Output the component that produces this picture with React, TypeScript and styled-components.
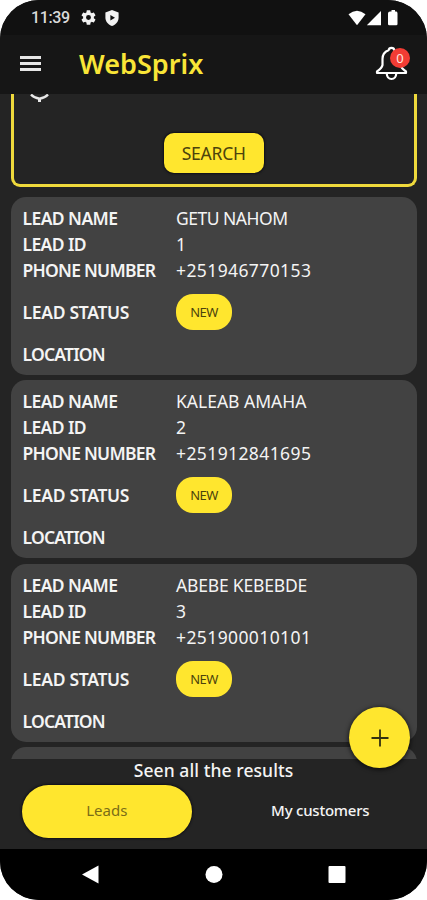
import React from "react";
import styled, { createGlobalStyle } from "styled-components";

const yellow = "#ffe62e";

const GlobalStyle = createGlobalStyle`
  * { box-sizing: border-box; }
  body { margin: 0; background: #fff; }
  button { border: 0; padding: 0; margin: 0; background: none; font: inherit; color: inherit; }
`;

const Screen = styled.div`
  position: relative;
  display: flex;
  flex-direction: column;
  width: 427px;
  height: 900px;
  overflow: hidden;
  border-radius: 39px;
  background: #242424;
  color: #f4f4f4;
  font-family: "Noto Sans", sans-serif;
`;

const StatusBar = styled.div`
  display: flex;
  align-items: center;
  flex: none;
  height: 35px;
  padding: 0 29px 0 31px;
  background: #111;
`;

const Clock = styled.span`
  width: 50px;
  padding-top: 1px;
  font: 500 16px/20px Roboto, sans-serif;
  letter-spacing: -0.35px;
  color: #dadada;
`;

const StatusIcons = styled.div<{ $gap: number; $end?: boolean }>`
  display: flex;
  align-items: center;
  gap: ${(p) => p.$gap}px;
  margin-left: ${(p) => (p.$end ? "auto" : "0")};
`;

const Header = styled.header`
  display: flex;
  align-items: center;
  flex: none;
  height: 59px;
  padding: 0 17px 2px 20px;
  background: #161616;
`;

const MenuButton = styled.button`
  display: grid;
  gap: 3px;
  width: 21px;
  margin-right: 38px;
`;

const MenuLine = styled.span`
  height: 3px;
  background: #e6e6e6;
`;

const Title = styled.h1`
  flex: 1;
  margin: 0;
  font-size: 27px;
  line-height: 36px;
  font-weight: 600;
  letter-spacing: 0.02px;
  color: #f9e537;
`;

const BellButton = styled.button`
  position: relative;
  display: block;
  width: 36px;
  height: 36px;
`;

const Count = styled.span`
  position: absolute;
  top: 2px;
  right: 0;
  width: 20px;
  height: 20px;
  border-radius: 50%;
  background: #f23c34;
  color: #ffe3df;
  font-size: 13px;
  line-height: 20px;
  text-align: center;
`;

const Content = styled.main`
  display: flex;
  flex-direction: column;
  flex: none;
  height: 665px;
  padding: 0 10.5px 0 11px;
  overflow: hidden;
`;

const SearchPanel = styled.section`
  display: flex;
  flex-direction: column;
  align-items: center;
  flex: none;
  height: 93px;
  margin-bottom: 10px;
  border: solid #efd93c;
  border-width: 0 3px 3px;
  border-radius: 0 0 9px 9px;
`;

const Chevron = styled.svg`
  display: block;
  align-self: flex-start;
  margin: 0 0 30px 15px;
`;

const SearchButton = styled.button`
  width: 100px;
  height: 40px;
  padding-bottom: 1px;
  border-radius: 10px;
  background: ${yellow};
  color: #4c430c;
  font-size: 17.5px;
  letter-spacing: -0.2px;
  box-shadow: 0 0 2px 1px #101018;
`;

const Card = styled.article`
  flex: none;
  height: 178px;
  margin-bottom: 5.4px;
  padding: 8px 11.5px;
  border-radius: 15px;
  background: #424242;
`;

const Row = styled.div<{ $tall?: boolean }>`
  display: grid;
  grid-template-columns: 153.5px 1fr;
  align-items: center;
  height: ${(p) => (p.$tall ? 42 : 26)}px;
  margin: ${(p) => (p.$tall ? "8px 0" : "0")};
  font-size: 17.5px;
  line-height: 26px;
  white-space: nowrap;
`;

const Label = styled.span<{ $track: number }>`
  font-weight: 600;
  letter-spacing: ${(p) => p.$track}px;
`;

const Value = styled.span<{ $track: number }>`
  letter-spacing: ${(p) => p.$track}px;
`;

const StatusPill = styled.span`
  width: 56px;
  height: 36px;
  border-radius: 17px;
  background: ${yellow};
  color: #4c430c;
  font-size: 13px;
  line-height: 36px;
  letter-spacing: -0.5px;
  text-align: center;
`;

const Footer = styled.footer`
  display: flex;
  flex-direction: column;
  flex: none;
  height: 90px;
`;

const ResultNote = styled.p`
  margin: 0;
  padding-bottom: 4px;
  font-size: 17.5px;
  line-height: 22px;
  font-weight: 500;
  letter-spacing: 0.08px;
  text-align: center;
`;

const Tabs = styled.nav`
  display: grid;
  grid-template-columns: 1fr 1fr;
`;

const Tab = styled.button<{ $active?: boolean }>`
  width: 170px;
  height: 53px;
  margin: 0 auto;
  padding-bottom: 4px;
  border-radius: 27px;
  background: ${(p) => (p.$active ? yellow : "transparent")};
  color: ${(p) => (p.$active ? "#7b6d17" : "#f4f4f4")};
  box-shadow: ${(p) => (p.$active ? "0 0 2px 1px #111118" : "none")};
  font-size: 15px;
  font-weight: ${(p) => (p.$active ? 400 : 500)};
  letter-spacing: ${(p) => (p.$active ? 0 : -0.23)}px;
`;

const AddButton = styled.button`
  position: absolute;
  left: 349px;
  top: 707px;
  display: grid;
  place-items: center;
  width: 61px;
  height: 61px;
  border-radius: 50%;
  background: ${yellow};
  box-shadow: 0 1px 4px 1px rgba(0, 0, 0, 0.6);
`;

const SystemBar = styled.div`
  display: grid;
  grid-template-columns: repeat(3, 123px);
  justify-content: center;
  align-items: center;
  justify-items: center;
  flex: none;
  height: 51px;
  background: #000;
`;

type Lead = { id: number; name: string; track: number; phone: string };

const leads: Lead[] = [
  { id: 1, name: "GETU NAHOM", track: -0.5, phone: "+251946770153" },
  { id: 2, name: "KALEAB AMAHA", track: 0, phone: "+251912841695" },
  { id: 3, name: "ABEBE KEBEBDE", track: -0.19, phone: "+251900010101" },
];

function LeadCard({ lead }: { lead: Lead }) {
  return (
    <Card>
      <Row>
        <Label $track={-0.57}>LEAD NAME</Label>
        <Value $track={lead.track}>{lead.name}</Value>
      </Row>
      <Row>
        <Label $track={-0.6}>LEAD ID</Label>
        <Value $track={0}>{lead.id}</Value>
      </Row>
      <Row>
        <Label $track={-0.75}>PHONE NUMBER</Label>
        <Value $track={0.4}>{lead.phone}</Value>
      </Row>
      <Row $tall>
        <Label $track={-0.3}>LEAD STATUS</Label>
        <StatusPill>NEW</StatusPill>
      </Row>
      <Row>
        <Label $track={-0.8}>LOCATION</Label>
      </Row>
    </Card>
  );
}

function GearIcon() {
  return (
    <svg width="15" height="15" viewBox="2 2 20 20" fill="#f2f2f2">
      <path d="M19.14 12.94c.04-.3.06-.61.06-.94 0-.32-.02-.64-.07-.94l2.03-1.58a.49.49 0 0 0 .12-.61l-1.92-3.32a.488.488 0 0 0-.59-.22l-2.39.96c-.5-.38-1.03-.7-1.62-.94l-.36-2.54a.484.484 0 0 0-.48-.41h-3.84c-.24 0-.43.17-.47.41l-.36 2.54c-.59.24-1.13.57-1.62.94l-2.39-.96c-.22-.08-.47 0-.59.22L2.74 8.87c-.12.21-.08.47.12.61l2.03 1.58c-.05.3-.09.63-.09.94s.02.64.07.94l-2.03 1.58a.49.49 0 0 0-.12.61l1.92 3.32c.12.22.37.29.59.22l2.39-.96c.5.38 1.03.7 1.62.94l.36 2.54c.05.24.24.41.48.41h3.84c.24 0 .44-.17.47-.41l.36-2.54c.59-.24 1.13-.56 1.62-.94l2.39.96c.22.08.47 0 .59-.22l1.92-3.32c.12-.22.07-.47-.12-.61l-2.01-1.58zM12 15.3A3.3 3.3 0 1 1 12 8.7a3.3 3.3 0 0 1 0 6.6z" />
    </svg>
  );
}

function ShieldIcon() {
  return (
    <svg width="14" height="16" viewBox="0 0 14 16">
      <path d="M7 0L13.6 2.4V7.5C13.6 11.5 10.8 14.8 7 16C3.2 14.8.4 11.5.4 7.5V2.4Z" fill="#f2f2f2" />
      <path d="M5.4 4.9L10 7.7L5.4 10.5Z" fill="#111" />
    </svg>
  );
}

export default function App() {
  return (
    <>
      <GlobalStyle />
      <Screen>
        <StatusBar>
          <Clock>11:39</Clock>
          <StatusIcons $gap={9}>
            <GearIcon />
            <ShieldIcon />
          </StatusIcons>
          <StatusIcons $gap={0} $end>
            <svg width="50" height="16" viewBox="0 0 50 16" fill="#fff">
              <path d="M0.500 4.200Q9 -2.800 17.500 4.200L9 15.300Z" />
              <path d="M33 1V15.300H18.800Z" />
              <path d="M42 1.500h1.500V0h3.500v1.500h1.500Q49.500 2 49.500 3.500V14q0 1.300-1.300 1.300h-6.900Q40 15.300 40 14V3.500Q40 1.500 42 1.500Z" />
            </svg>
          </StatusIcons>
        </StatusBar>
        <Header>
          <MenuButton aria-label="Menu">
            <MenuLine />
            <MenuLine />
            <MenuLine />
          </MenuButton>
          <Title>WebSprix</Title>
          <BellButton aria-label="Notifications">
            <svg width="36" height="36" viewBox="0 0 36 36" fill="none" stroke="#fff" strokeWidth="2.200" strokeLinejoin="round">
              <path d="M14.500 4.300Q15 1.800 17.500 1.800Q20 1.800 20.500 4.300Q26.500 6.500 26.500 13V19Q27 22 32 25.500V27H3V25.500Q8 22 8.500 19V13Q8.500 6.500 14.500 4.300Z" />
              <path d="M12.700 27.500Q13.200 33 17.500 33Q21.800 33 22.300 27.500" />
            </svg>
            <Count>0</Count>
          </BellButton>
        </Header>
        <Content>
          <SearchPanel>
            <Chevron width="20" height="9" viewBox="0 0 20 9" fill="none" stroke="#e8e8e8">
              <path d="M2 0.500Q5 4 10.500 4.800Q16 4 19 0.500" strokeWidth="2.400" />
              <path d="M10.500 4V8" strokeWidth="3" />
            </Chevron>
            <SearchButton>SEARCH</SearchButton>
          </SearchPanel>
          {leads.map((lead) => (
            <LeadCard key={lead.id} lead={lead} />
          ))}
          <Card />
        </Content>
        <Footer>
          <ResultNote>Seen all the results</ResultNote>
          <Tabs>
            <Tab $active>Leads</Tab>
            <Tab>My customers</Tab>
          </Tabs>
        </Footer>
        <SystemBar>
          <svg width="20" height="20" viewBox="0 0 20 20">
            <path d="M17.500 0.500V18.500L1 9.500Z" fill="#fff" />
          </svg>
          <svg width="18" height="18" viewBox="0 0 18 18">
            <circle cx="9" cy="8.500" r="8.500" fill="#fff" />
          </svg>
          <svg width="18" height="18" viewBox="0 0 18 18">
            <rect x="0.500" y="0" width="17" height="17" rx="1" fill="#fff" />
          </svg>
        </SystemBar>
        <AddButton aria-label="Add lead">
          <svg width="18" height="18" viewBox="0 0 18 18" stroke="#333010" strokeWidth="1.800">
            <path d="M9 0.500V17.500M0.500 9H17.500" />
          </svg>
        </AddButton>
      </Screen>
    </>
  );
}
